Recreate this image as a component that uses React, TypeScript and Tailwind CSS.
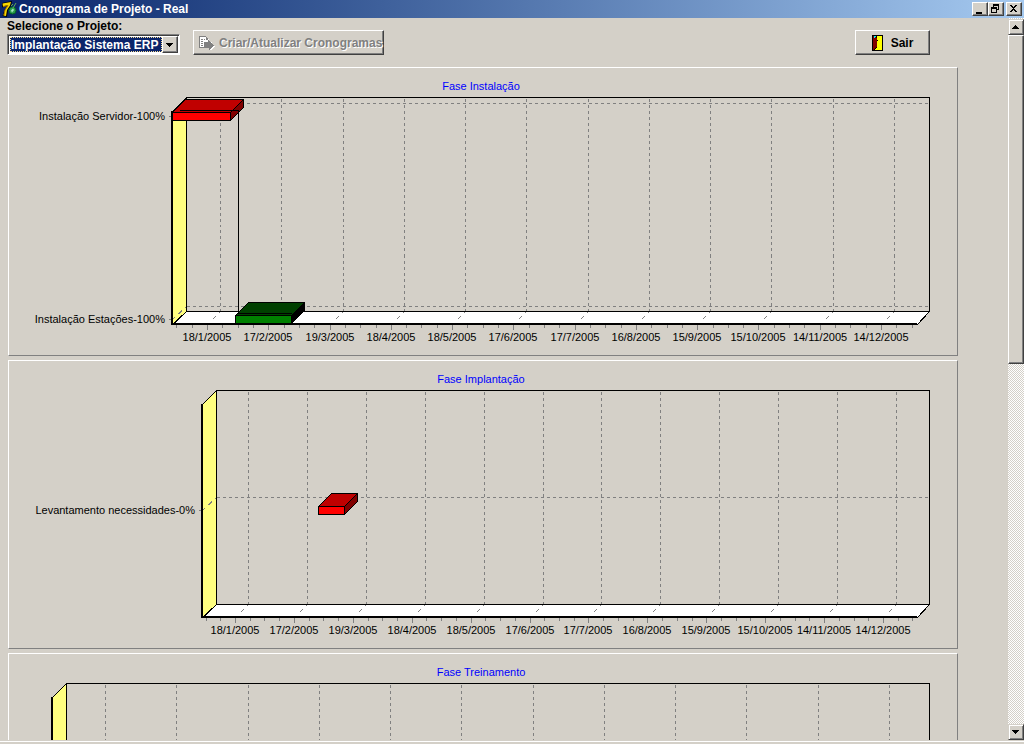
import type { ReactNode } from 'react'

type Task = {
  label: string
  y: number
  start: number
  end: number
  front: string
  top: string
  side: string
}

type Phase = {
  title: string
  left: number
  firstTick: number
  lastTick: number
  tasks: Task[]
  link?: { x: number; from: number; to: number; start: number; end: number }
}

const months = [
  '18/1/2005',
  '17/2/2005',
  '19/3/2005',
  '18/4/2005',
  '18/5/2005',
  '17/6/2005',
  '17/7/2005',
  '16/8/2005',
  '15/9/2005',
  '15/10/2005',
  '14/11/2005',
  '14/12/2005',
]

const red = { front: '#ff0000', top: '#c00000', side: '#800000' }
const green = { front: '#008000', top: '#004000', side: '#000000' }

const phases: Phase[] = [
  {
    title: 'Fase Instalação',
    left: 163,
    firstTick: 198,
    lastTick: 872,
    tasks: [
      { label: 'Instalação Servidor-100%', y: 24, start: 163, end: 221, ...red },
      { label: 'Instalação Estações-100%', y: 227, start: 226, end: 282, ...green },
    ],
    link: { x: 229, from: 18, to: 221, start: 170, end: 282 },
  },
  {
    title: 'Fase Implantação',
    left: 193,
    firstTick: 226,
    lastTick: 874,
    tasks: [{ label: 'Levantamento necessidades-0%', y: 125, start: 309, end: 335, ...red }],
  },
  {
    title: 'Fase Treinamento',
    left: 43,
    firstTick: 83,
    lastTick: 867,
    tasks: [],
  },
]

// Plot box: the back wall is shifted by DEPTH to the right and upwards
const DEPTH = 13
const TOP = 5
const FLOOR_BACK = 219
const FLOOR_FRONT = 232
const RIGHT_BACK = 920
const RIGHT_FRONT = 908

/**
 * 3D bar of a task.
 */
function TaskBar({ task }: { task: Task }) {
  const { start, end, y } = task
  const y1 = y - 4
  const y2 = y + 4

  return (
    <g stroke="#000">
      <polygon
        points={`${start},${y1} ${start + DEPTH},${y1 - DEPTH} ${end + DEPTH},${y1 - DEPTH} ${end},${y1}`}
        fill={task.top}
      />
      <polygon
        points={`${end},${y1} ${end + DEPTH},${y1 - DEPTH} ${end + DEPTH},${y2 - DEPTH} ${end},${y2}`}
        fill={task.side}
      />
      <rect x={start} y={y1} width={end - start} height={y2 - y1} fill={task.front} />
    </g>
  )
}

function GanttChart({ phase }: { phase: Phase }) {
  const { left, firstTick, lastTick, tasks, link } = phase
  const back = left + 14
  const step = (lastTick - firstTick) / (months.length - 1)
  const ticks = months.map((_, i) => Math.round(firstTick + i * step))

  const minor: number[] = []
  for (let i = -2; i < months.length * 4 - 1; i++) {
    const x = Math.round(firstTick + (i * step) / 4)
    if (i % 4 !== 0 && x > left) minor.push(x)
  }

  return (
    <svg viewBox="0 0 948 263" className="block w-full" role="img" aria-label={phase.title}>
      <g transform="translate(0.5 0.5)" shapeRendering="crispEdges" fill="none">
        <polygon
          points={`${left},${TOP + 14} ${back},${TOP} ${back},${FLOOR_BACK} ${left},${FLOOR_FRONT}`}
          fill="#ffff80"
          stroke="#000"
        />
        <polygon
          points={`${left + 1},${FLOOR_FRONT} ${back},${FLOOR_BACK} ${RIGHT_BACK},${FLOOR_BACK} ${RIGHT_FRONT},${FLOOR_FRONT}`}
          fill="#fff"
          stroke="#000"
        />

        <g stroke="#808080" strokeDasharray="3 3">
          {ticks.map((x) => (
            <path key={x} d={`M${x + DEPTH} ${TOP + 1}V${FLOOR_BACK}`} />
          ))}
          {tasks.map((task) => (
            <path key={task.label} d={`M${back} ${task.y - DEPTH}H${RIGHT_BACK}`} />
          ))}
        </g>
        <g stroke="#808080" strokeDasharray="2 4 5 5 2 9">
          {ticks.map((x) => (
            <path key={x} d={`M${x + DEPTH} ${FLOOR_BACK}L${x} ${FLOOR_FRONT}`} />
          ))}
          {tasks.map((task) => (
            <path key={task.label} d={`M${back} ${task.y - DEPTH}L${left} ${task.y}`} />
          ))}
        </g>

        <path d={`M${back} ${TOP}H${RIGHT_BACK}V${FLOOR_BACK}H${back}Z`} stroke="#000" />

        <g stroke="#808080">
          {ticks.map((x) => (
            <path key={x} d={`M${x} ${FLOOR_FRONT}v5`} />
          ))}
          {minor.map((x) => (
            <path key={x} d={`M${x} ${FLOOR_FRONT}v3`} />
          ))}
          {tasks.map((task) => (
            <path key={task.label} d={`M${left - 4} ${task.y}h4`} />
          ))}
        </g>
      </g>

      <g fill="#000" shapeRendering="crispEdges">
        <rect x={left - 1} y={TOP + 14} width="2" height={FLOOR_FRONT - TOP - 13} />
        <rect x={left - 1} y={FLOOR_FRONT - 1} width={RIGHT_FRONT - left + 1} height="2" />
      </g>

      <g transform="translate(0.5 0.5)" shapeRendering="crispEdges" fill="none">
        {tasks.map((task) => (
          <TaskBar key={task.label} task={task} />
        ))}
        {link && (
          <path
            d={`M${link.start} ${link.from}H${link.x}V${link.to}M${link.x - 2} ${link.to}H${link.end}`}
            stroke="#000"
          />
        )}
      </g>

      {/* an empty phase gets no labels on its axes */}
      {tasks.length > 0 && (
        <g className="text-[11px]" fill="#000">
          {tasks.map((task) => (
            <text key={task.label} x={left - 7} y={task.y + 4} textAnchor="end">
              {task.label}
            </text>
          ))}
          {months.map((month, i) => (
            <text key={month} x={ticks[i]} y="249" textAnchor="middle">
              {month}
            </text>
          ))}
        </g>
      )}
    </svg>
  )
}

function PhasePanel({ phase }: { phase: Phase }) {
  return (
    <section className="border border-t-white border-r-[#808080] border-b-[#808080] border-l-white">
      <h2 className="h-6 pt-3 pr-1 text-center text-[11px] leading-3 text-[#0000ff]">{phase.title}</h2>
      <GanttChart phase={phase} />
    </section>
  )
}

function CaptionButton({ label, children }: { label: string; children: ReactNode }) {
  return (
    <button
      type="button"
      aria-label={label}
      className="flex h-[14px] w-4 items-center justify-center border border-t-white border-r-[#404040] border-b-[#404040] border-l-white bg-[#d4d0c8] shadow-[inset_-1px_-1px_0_#808080]"
    >
      <svg width="14" height="12" viewBox="0 0 14 12" shapeRendering="crispEdges" aria-hidden="true">
        {children}
      </svg>
    </button>
  )
}

function ScrollButton({ label, points }: { label: string; points: string }) {
  return (
    <button
      type="button"
      aria-label={label}
      className="flex h-4 w-4 shrink-0 items-center justify-center border border-t-[#d4d0c8] border-r-[#404040] border-b-[#404040] border-l-[#d4d0c8] bg-[#d4d0c8] shadow-[inset_1px_1px_0_#fff,inset_-1px_-1px_0_#808080]"
    >
      <svg width="8" height="4" viewBox="0 0 8 4" shapeRendering="crispEdges" aria-hidden="true">
        <polygon points={points} />
      </svg>
    </button>
  )
}

function DelphiIcon() {
  return (
    <svg width="16" height="16" viewBox="0 0 16 16" aria-hidden="true">
      <path d="M1 2L11 0L10 5L7 9L6 16L1.500 15L3.500 9L6 5L1 6.500Z" fill="#000" />
      <path d="M1.500 2.500L10 1L9 4.500L6 9L5 15L2.500 14.500L4 9L7 4L2 5.500Z" fill="#f8d800" />
      <path d="M2 5.500L7 4.500L4 9L3 14" fill="none" stroke="#a87800" />
      <circle cx="11.500" cy="9.500" r="3.500" fill="#2f9e50" stroke="#062" />
      <path d="M10 9.500L12 7.500L13 9L11 11.500Z" fill="#a8e8c0" />
      <path d="M12 7L15 2M10 5L12 3" stroke="#5fae50" fill="none" />
    </svg>
  )
}

function ExportIcon() {
  return (
    <svg width="17" height="16" viewBox="0 0 17 16" shapeRendering="crispEdges" aria-hidden="true">
      <path d="M2 2h7v2h2v3h3v2h1v1h1v1h1v1h-1v1h-1v1h-1v1h-3v-2h-9z" fill="#fff" />
      <path d="M1 1h7v1h-6v10h4v1h-5z" fill="#808080" />
      <path d="M8 2h1v1h1v2h-2zM3 4h2v1h-2zM3 6h2v1h-2zM3 8h2v1h-2zM3 10h2v1h-2zM6 4h1v1h-1z" fill="#808080" />
      <path d="M6 7h4v-2h1v1h1v1h1v1h1v1h1v1h1v1h-1v1h-1v1h-1v1h-1v1h-1v-2h-5z" fill="#808080" />
    </svg>
  )
}

function DoorIcon() {
  return (
    <svg width="11" height="16" viewBox="0 0 11 16" shapeRendering="crispEdges" aria-hidden="true">
      <rect width="11" height="16" fill="#000" />
      <rect x="5" y="1" width="5" height="14" fill="#ff0" />
      <path d="M1 1h3v2h1v9h-1v1h-1v1h-1v1h-1z" fill="#800000" />
      <path d="M2 1h2v1h-1v1h-1z" fill="#0ff" />
      <path d="M3 15v-1h1v-1h1v2z" fill="#ff0" />
      <rect x="5" y="5" width="1" height="1" fill="#000" />
    </svg>
  )
}

function Toolbar() {
  const button =
    'flex h-[25px] items-center border border-t-white border-r-[#404040] border-b-[#404040] border-l-white shadow-[inset_-1px_-1px_0_#808080]'

  return (
    <div className="flex items-end pr-[78px] pb-3 pl-[7px] text-[12px] font-bold">
      <div>
        <label htmlFor="project" className="block h-4 leading-4 whitespace-nowrap">
          Selecione o Projeto:
        </label>
        <div className="relative h-[21px] w-[173px] border border-t-[#808080] border-r-white border-b-white border-l-[#808080] bg-white p-[2px] shadow-[inset_1px_1px_0_#404040]">
          <select
            id="project"
            className="block h-[15px] w-[152px] appearance-none border border-dotted border-[#f5db95] bg-[#0a246a] p-0 text-[12px] leading-3 font-bold text-white outline-none"
          >
            <option>Implantação Sistema ERP</option>
          </select>
          <span className="pointer-events-none absolute top-px right-px flex h-[17px] w-4 items-center justify-center border border-t-white border-r-[#404040] border-b-[#404040] border-l-white bg-[#d4d0c8] shadow-[inset_-1px_-1px_0_#808080]">
            <svg width="8" height="4" viewBox="0 0 8 4" shapeRendering="crispEdges" aria-hidden="true">
              <polygon points="0,0 7,0 4,4 3,4" />
            </svg>
          </span>
        </div>
      </div>

      <button
        type="button"
        disabled
        className={`${button} ml-[13px] w-[191px] gap-1 pl-1 whitespace-nowrap text-[#808080] [text-shadow:1px_1px_0_#fff]`}
      >
        <ExportIcon />
        Criar/Atualizar Cronogramas
      </button>

      <button type="button" className={`${button} ml-auto w-[75px] justify-center gap-2`}>
        <DoorIcon />
        Sair
      </button>
    </div>
  )
}

export default function App() {
  return (
    <div className="flex h-screen flex-col overflow-hidden bg-[#d4d0c8] font-['Liberation_Sans',Arial,sans-serif] text-black">
      <header className="flex h-[18px] shrink-0 items-center bg-linear-to-r from-[#0a246a] to-[#a6caf0] pr-[2px] pl-px">
        <DelphiIcon />
        <h1 className="ml-[2px] text-[12px] leading-4 font-bold text-white">Cronograma de Projeto - Real</h1>
        <div className="ml-auto flex">
          <CaptionButton label="Minimizar">
            <rect x="3" y="9" width="6" height="2" />
          </CaptionButton>
          <CaptionButton label="Restaurar">
            <path d="M4 1h6v6h-2v-1h1v-3h-4v1h-1zM2 4h6v6h-6zM3 6v3h4v-3z" fillRule="evenodd" />
          </CaptionButton>
          <div className="ml-[2px] flex">
            <CaptionButton label="Fechar">
              <path d="M3 2h2v1h1v1h1v-1h1v-1h2v1h-1v1h-1v1h-1v1h1v1h1v1h1v1h-2v-1h-1v-1h-1v1h-1v1h-2v-1h1v-1h1v-1h1v-1h-1v-1h-1v-1h-1z" />
            </CaptionButton>
          </div>
        </div>
      </header>

      <div className="flex min-h-0 flex-1">
        <main className="min-w-0 flex-1 overflow-hidden">
          <Toolbar />
          <div className="flex flex-col gap-1 pr-[50px] pl-2">
            {phases.map((phase) => (
              <PhasePanel key={phase.title} phase={phase} />
            ))}
          </div>
        </main>

        <div className="flex w-4 shrink-0 flex-col bg-[repeating-conic-gradient(#fff_0_25%,#d4d0c8_0_50%)] bg-size-[2px_2px] pt-px">
          <ScrollButton label="Rolar para cima" points="3,0 4,0 7,4 0,4" />
          <div className="h-[329px] border border-t-white border-r-[#404040] border-b-[#404040] border-l-white bg-[#d4d0c8] shadow-[inset_-1px_-1px_0_#808080]" />
          <div className="flex-1" />
          <ScrollButton label="Rolar para baixo" points="0,0 7,0 4,4 3,4" />
        </div>
      </div>

      <footer className="h-1 shrink-0 pt-px">
        <div className="h-px bg-white" />
      </footer>
    </div>
  )
}
